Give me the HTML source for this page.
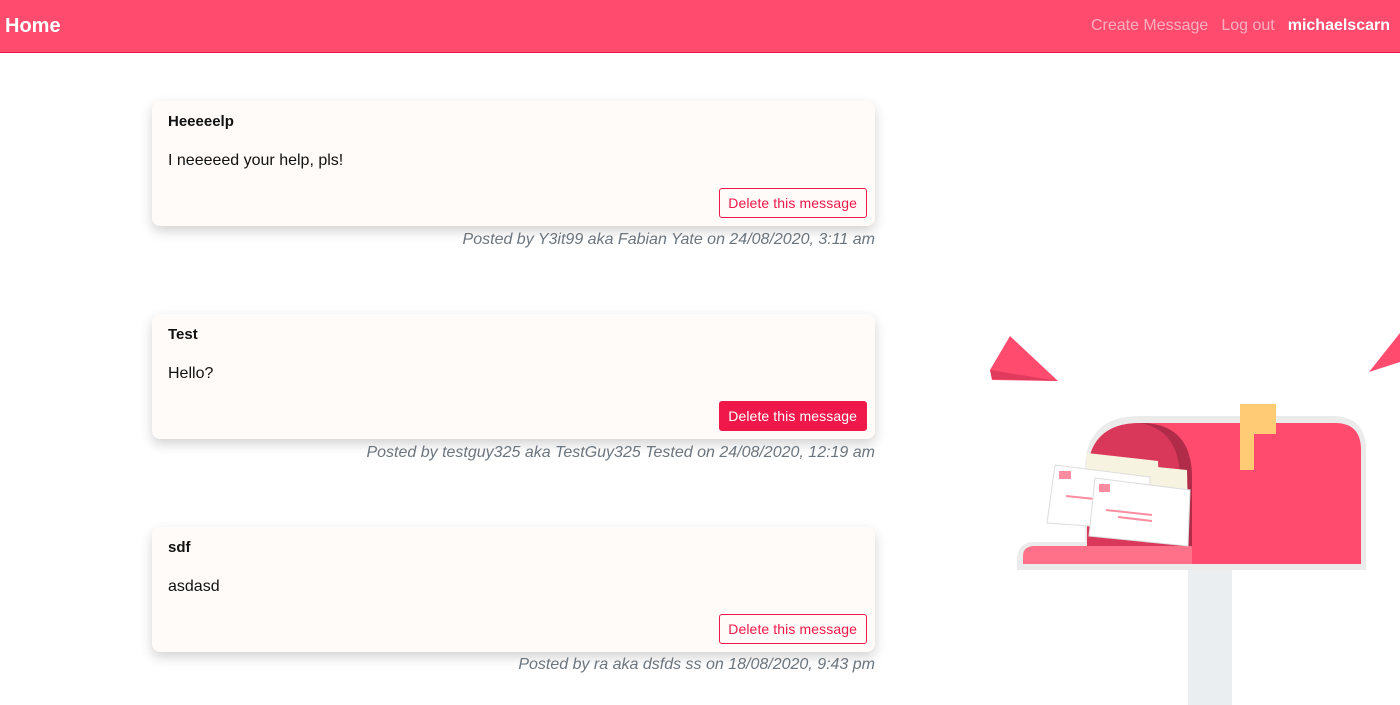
<!DOCTYPE html>
<html><head><meta charset="utf-8"><style>
*{box-sizing:border-box;margin:0;padding:0}
body{width:1400px;height:705px;overflow:hidden;background:#fff;font-family:"Liberation Sans",sans-serif;color:#111;position:relative}
.nav{height:53px;background:#ff4b6e;border-bottom:1px solid #f0174a;position:relative}
.nav .home{position:absolute;left:5px;top:15px;color:#fff;font-size:20px;font-weight:600}
.nav .r{position:absolute;right:10px;top:17px;font-size:16px;color:rgba(255,255,255,.55)}
.nav .r span{margin-left:13px}
.nav .r b{color:#fff;margin-left:13px}
.card{position:absolute;left:152px;width:723px;height:125px;background:#fffbf8;border-radius:8px;box-shadow:0 5px 12px rgba(0,0,0,.18)}
.card h5{position:absolute;left:16px;top:12px;font-size:15px;font-weight:bold}
.card p{position:absolute;left:16px;top:51px;font-size:16px}
.btn{position:absolute;right:8px;top:87px;height:30px;padding:0 9px 0 8px;border:1px solid #f0174a;border-radius:3px;color:#f0174a;font-size:14px;line-height:28px;background:transparent;letter-spacing:0.1px}
.btn.f{background:#f0174a;color:#fff}
.meta{position:absolute;right:525px;font-size:16px;font-style:italic;color:#6c757d}
</style></head><body>
<div class="nav"><div class="home">Home</div><div class="r"><span>Create Message</span><span>Log out</span><b>michaelscarn</b></div></div>

<div class="card" style="top:101px"><h5>Heeeeelp</h5><p>I neeeeed your help, pls!</p><div class="btn">Delete this message</div></div>
<div class="meta" style="top:231px">Posted by Y3it99 aka Fabian Yate on 24/08/2020, 3:11 am</div>

<div class="card" style="top:314px"><h5>Test</h5><p>Hello?</p><div class="btn f">Delete this message</div></div>
<div class="meta" style="top:444px">Posted by testguy325 aka TestGuy325 Tested on 24/08/2020, 12:19 am</div>

<div class="card" style="top:527px"><h5>sdf</h5><p>asdasd</p><div class="btn">Delete this message</div></div>
<div class="meta" style="top:656px">Posted by ra aka dsfds ss on 18/08/2020, 9:43 pm</div>

<svg style="position:absolute;left:0;top:0" width="1400" height="705">
<rect x="1188" y="560" width="44" height="145" fill="#ebeef1"/>
<path d="M1017 570 V560 Q1017 542 1035 542 H1085 V470 Q1085 416 1140 416 H1332 Q1366 416 1366 450 V570 Z" fill="#ebebeb"/>
<path d="M1087 564 V478 Q1087 423 1140 423 H1335 Q1361 423 1361 450 V564 Z" fill="#ff4b6e"/>
<path d="M1087 546 V478 Q1087 423 1140 423 Q1192 423 1192 478 V546 Z" fill="#d9385a"/>
<path d="M1140 423 Q1192 423 1192 478 V546 H1180 V480 Q1180 430 1140 423Z" fill="#b02c48"/>
<path d="M1023 564 V556 Q1023 546 1035 546 H1192 V564 Z" fill="#ff7089"/>
<rect x="1240" y="404" width="36" height="30" fill="#ffcb74"/>
<rect x="1240" y="404" width="14" height="66" fill="#ffcb74"/>
<g>
<polygon points="1087,453 1158,461 1160,505 1085,500" fill="#f6f4e0"/>
<polygon points="1117,463 1187,470 1188,515 1114,510" fill="#f6f4e0"/>
<polygon points="1055,465 1150,477 1148,530 1047,523" fill="#fff" stroke="#ddd"/>
<rect x="1059" y="471" width="12" height="8" fill="#ff8ca0"/>
<line x1="1066" y1="496" x2="1095" y2="499" stroke="#ff8ca0" stroke-width="2"/>
<polygon points="1095,478 1190,490 1188,546 1089,536" fill="#fff" stroke="#ddd"/>
<rect x="1099" y="484" width="11" height="8" fill="#ff8ca0"/>
<line x1="1106" y1="510" x2="1152" y2="515" stroke="#ff8ca0" stroke-width="2"/>
<line x1="1118" y1="517" x2="1152" y2="521" stroke="#ff8ca0" stroke-width="2"/>
</g>
<polygon points="1010,336 1058,381 992,380 990,370" fill="#ff4b6e"/>
<polygon points="990,370 1058,381 992,379" fill="#e03a5c"/>
<polygon points="1400,333 1400,362 1369,372" fill="#ff4b6e"/>
</svg>
</body></html>
